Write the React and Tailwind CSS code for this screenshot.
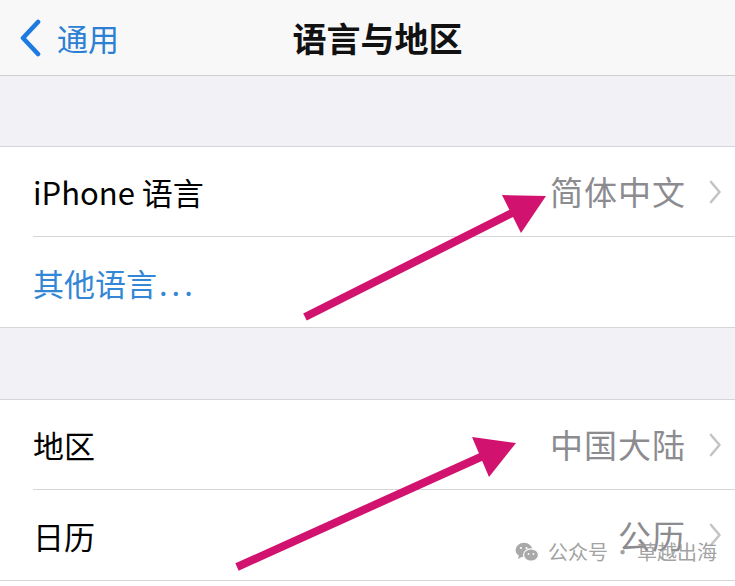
const font = { fontFamily: '"Noto Sans CJK SC", "Noto Sans", sans-serif' };

const Chevron = () => (
    <svg width="14" height="24" viewBox="0 0 14 24" className="shrink-0">
        <path d="M3 2 L11.5 12 L3 22" fill="none" stroke="#c4c4c8" strokeWidth="2.6" strokeLinecap="round" strokeLinejoin="round" />
    </svg>
);

const Row = ({ label, value, blue, last }) => (
    <div className="h-[90px] flex items-stretch pl-[33px] bg-white">
        <div className={`flex-1 flex items-center pr-[13px] ${last ? '' : 'border-b border-[#d6d6da]'}`}>
            <span className={`flex-1 text-[31px] leading-none ${blue ? 'text-[#3487d6]' : 'text-black'}`}>{label}</span>
            {value && (
                <div className="flex items-center gap-[22px]">
                    <span className="text-[33px] leading-none text-[#8c8c90] tracking-[1px]">{value}</span>
                    <Chevron />
                </div>
            )}
        </div>
    </div>
);

const Section = ({ children }) => (
    <div className="bg-white border-b border-[#d6d6da]">{children}</div>
);

const Arrow = ({ x1, y1, x2, y2, a, b, c }) => (
    <g>
        <line x1={x1} y1={y1} x2={x2} y2={y2} stroke="#d1126e" strokeWidth="8" strokeLinecap="butt" />
        <polygon points={`${a} ${b} ${c}`} fill="#d1126e" />
    </g>
);

const WeChat = () => (
    <svg width="24" height="20" viewBox="0 0 24 20">
        <ellipse cx="9" cy="8" rx="8.5" ry="7.2" fill="#a0a0a0" />
        <path d="M4 13 L3 17 L7.5 14.5 Z" fill="#a0a0a0" />
        <ellipse cx="16" cy="13" rx="7.5" ry="6.2" fill="#a0a0a0" stroke="#fff" strokeWidth="1.2" />
        <circle cx="6" cy="6" r="1.1" fill="#fff" />
        <circle cx="11.5" cy="6" r="1.1" fill="#fff" />
        <circle cx="13.5" cy="12" r="0.9" fill="#fff" />
        <circle cx="18.5" cy="12" r="0.9" fill="#fff" />
    </svg>
);

export default function App() {
    return (
        <div className="relative w-[735px] h-[586px] overflow-hidden bg-white" style={font}>
            {/* Nav bar */}
            <header className="h-[76px] bg-[#f8f8f9] border-b border-[#cfcfd3] flex items-center relative">
                <div className="flex items-center pl-[18px] gap-[16px]">
                    <svg width="24" height="38" viewBox="0 0 24 38">
                        <path d="M20 3 L5 19 L20 35" fill="none" stroke="#1c7ae0" strokeWidth="4.6" strokeLinecap="round" strokeLinejoin="round" />
                    </svg>
                    <span className="text-[31px] leading-none -ml-[1px] text-[#2c80d4]">通用</span>
                </div>
                <h1 className="absolute left-0 right-0 text-center text-[34px] font-bold leading-none text-[#111] pl-[20px]">语言与地区</h1>
            </header>

            <div className="h-[71px] bg-[#f2f2f6] border-b border-[#d6d6da]" />

            <Section>
                <Row label="iPhone 语言" value="简体中文" />
                <Row label={<>其他语言<span className="tracking-[4px] ml-[2px]">...</span></>} blue last />
            </Section>

            <div className="h-[72px] bg-[#f2f2f6] border-b border-[#d6d6da]" />

            <Section>
                <Row label="地区" value="中国大陆" />
                <Row label="日历" value="公历" last />
            </Section>

            {/* annotation arrows */}
            <svg className="absolute inset-0 pointer-events-none" width="735" height="586">
                <Arrow x1={305} y1={317} x2={514} y2={212} a="502,195" b="546,196" c="521,233" />
                <Arrow x1={237} y1={567} x2={483} y2={456} a="472,437" b="516,443" c="489,477" />
            </svg>

            {/* watermark */}
            <div className="absolute left-[515px] top-[542px] flex items-center gap-[9px] text-[20px] leading-none text-[#999999] opacity-90">
                <WeChat />
                <span>公众号 · 草越出海</span>
            </div>
        </div>
    );
}
